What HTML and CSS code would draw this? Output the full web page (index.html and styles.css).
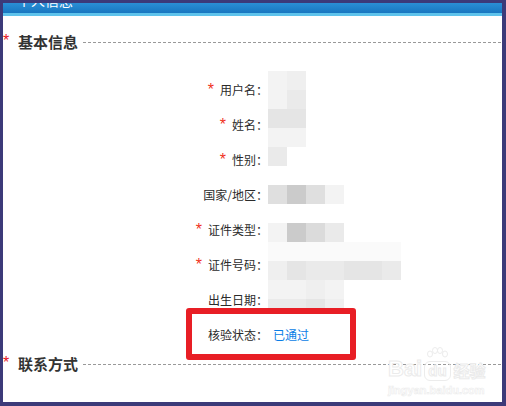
FILE: index.html
```html
<!DOCTYPE html>
<html>
<head>
    <title>个人信息</title>
    <meta charset="utf-8">
    <link rel="stylesheet" href="styles.css">
</head>
<body>
    <div class="frame">
        <div class="top-bar"><span class="top-title">个人信息</span></div>

        <div class="section-title">
            <span class="req">*</span><span class="section-name">基本信息</span><span class="dash"></span>
        </div>

        <div class="form">
            <!-- pixelated cover over the personal values -->
            <div class="mosaic">
                <div class="mrow"><i class="s2"></i><i class="s3"></i></div>
                <div class="mrow"><i class="s2"></i><i class="s4"></i></div>
                <div class="mrow"><i class="s5"></i><i class="s5"></i></div>
                <div class="mrow"><i class="s2"></i><i class="s2"></i></div>
                <div class="mrow"><i class="s4"></i></div>
                <div class="mrow"></div>
                <div class="mrow"><i class="s6"></i><i class="s8"></i><i class="s6"></i><i class="s2"></i></div>
                <div class="mrow"></div>
                <div class="mrow"><i class="s2"></i><i class="s8"></i><i class="s7"></i><i class="s4"></i></div>
                <div class="mrow"><i class="s1"></i><i class="s1"></i><i class="s1"></i><i class="s1"></i><i class="s1"></i><i class="s1"></i><i class="s1"></i></div>
                <div class="mrow"><i class="s3"></i><i class="s5"></i><i class="s4"></i><i class="s4"></i><i class="s5"></i><i class="s5"></i><i class="s4"></i></div>
                <div class="mrow"><i class="s2"></i><i class="s2"></i><i class="s3"></i><i class="s2"></i></div>
                <div class="mrow mrow-last"><i class="s4"></i><i class="s4"></i><i class="s5"></i><i class="s3"></i></div>
            </div>

            <div class="row"><span class="label"><span class="star">*</span>用户名：</span><span class="value"></span></div>
            <div class="row"><span class="label"><span class="star">*</span>姓名：</span><span class="value"></span></div>
            <div class="row"><span class="label"><span class="star">*</span>性别：</span><span class="value"></span></div>
            <div class="row"><span class="label">国家/地区：</span><span class="value"></span></div>
            <div class="row"><span class="label"><span class="star">*</span>证件类型：</span><span class="value"></span></div>
            <div class="row"><span class="label"><span class="star">*</span>证件号码：</span><span class="value"></span></div>
            <div class="row"><span class="label">出生日期：</span><span class="value"></span></div>
            <div class="row row-check">
                <span class="label">核验状态：</span><span class="value status">已通过</span>
                <span class="mark"></span>
            </div>
        </div>

        <div class="section-title section-contact">
            <span class="req">*</span><span class="section-name">联系方式</span><span class="dash"></span>
        </div>

        <div class="watermark">
            <div class="wm-logo">
                <span class="wm-bai">Bai</span>
                <span class="wm-du">
                    <svg class="wm-paw" width="22" height="14" viewBox="0 0 22 14">
                        <ellipse cx="4" cy="7" rx="2.5" ry="3" fill="none" stroke="#ececec"/>
                        <ellipse cx="9" cy="3.5" rx="2.5" ry="3" fill="none" stroke="#ececec"/>
                        <ellipse cx="14" cy="3.5" rx="2.5" ry="3" fill="none" stroke="#ececec"/>
                        <ellipse cx="19" cy="7" rx="2.5" ry="3" fill="none" stroke="#ececec"/>
                    </svg>
                    <span class="wm-du-text">du</span>
                </span>
                <span class="wm-jy">经验</span>
            </div>
            <div class="wm-url">jingyan.baidu.com</div>
        </div>
    </div>
</body>
</html>
```

FILE: styles.css
```css
body {
    margin: 0;
    font-family: "Noto Sans CJK SC", "Noto Sans", sans-serif;
    background: #3c3a79;
}
.frame {
    position: relative;
    width: 506px;
    height: 406px;
    box-sizing: border-box;
    border-style: solid;
    border-color: #3c3a79;
    border-width: 3px 4px 4px 3px;
    background: #fff;
    overflow: hidden;
}
.top-bar {
    height: 10px;
    background: linear-gradient(#2a8fd6, #1876c0);
    border-bottom: 3px solid #5ec3ec;
    overflow: hidden;
    padding-left: 14px;
}
.top-title {
    display: block;
    margin-top: -10px;
    color: #fff;
    font-size: 14px;
    line-height: 14px;
}
.section-title {
    display: flex;
    align-items: center;
    height: 20px;
    margin-top: 16px;
}
.section-contact {
    margin-top: 2px;
}
.req {
    width: 15px;
    color: #e8141e;
    font-family: "Liberation Sans", sans-serif;
    font-size: 16px;
    line-height: 20px;
    margin-top: -2px;
}
.section-name {
    font-size: 15px;
    font-weight: 700;
    color: #333;
    line-height: 20px;
}
.dash {
    flex: 1;
    height: 1px;
    margin-left: 5px;
    background: repeating-linear-gradient(to right, #999 0 3px, transparent 3px 5px);
}
.form {
    position: relative;
    margin-top: 20px;
}
.row {
    position: relative;
    display: flex;
    align-items: center;
    height: 35px;
    font-size: 12px;
    color: #2b2b2b;
}
.label {
    width: 265px;
    text-align: right;
    line-height: 16px;
}
.star {
    color: #f0321e;
    font-family: "Liberation Sans", sans-serif;
    font-size: 16px;
    margin-right: 6px;
}
.value {
    padding-left: 5px;
}
.status {
    color: #0a7de6;
}
.mark {
    position: absolute;
    left: 183px;
    top: -9px;
    width: 158px;
    height: 40px;
    border: 6px solid #e81e25;
    border-radius: 3px;
}
.mosaic {
    position: absolute;
    left: 265px;
    top: -1px;
}
.mrow {
    display: flex;
    height: 19px;
}
.mrow-last {
    height: 11px;
}
.mrow i {
    width: 19px;
}
.s1 { background: #fafafa; }
.s2 { background: #f3f3f3; }
.s3 { background: #efefef; }
.s4 { background: #eaeaea; }
.s5 { background: #e5e5e5; }
.s6 { background: #dfdfdf; }
.s7 { background: #dbdbdb; }
.s8 { background: #cbcbcb; }
.watermark {
    position: absolute;
    left: 385px;
    top: 342px;
    color: #fff;
    -webkit-text-stroke: 1px #ebebeb;
    font-family: "Liberation Sans", sans-serif;
    font-weight: 700;
}
.wm-logo {
    display: flex;
    align-items: flex-end;
    height: 36px;
}
.wm-bai {
    font-size: 22px;
    line-height: 24px;
}
.wm-du {
    display: flex;
    flex-direction: column;
    align-items: center;
    margin-left: 2px;
}
.wm-du-text {
    font-size: 15px;
    line-height: 18px;
    padding: 0 3px;
    border: 1px solid #ececec;
    border-radius: 6px;
}
.wm-jy {
    font-family: "Noto Sans CJK SC", sans-serif;
    font-size: 16px;
    line-height: 22px;
    margin-left: 3px;
}
.wm-url {
    font-size: 11px;
    line-height: 14px;
    margin-top: 2px;
    -webkit-text-stroke: 0.6px #ececec;
}
```
